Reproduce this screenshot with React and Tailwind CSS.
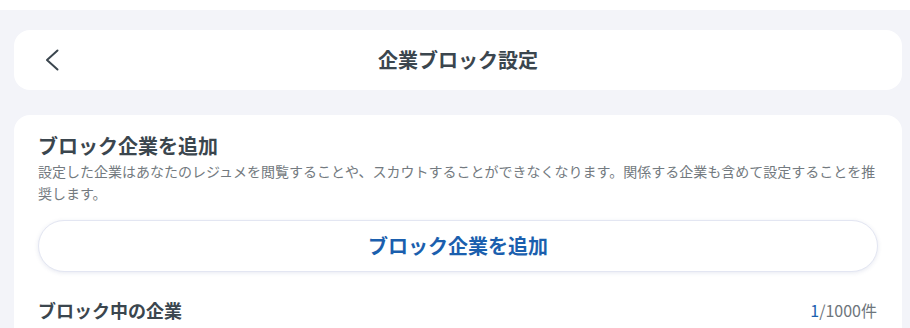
import React from 'react';

const font = { fontFamily: '"Noto Sans CJK JP", "Noto Sans", sans-serif' };

export default function App() {
  const blocked = 1;
  const limit = 1000;

  return (
    <div className="min-h-screen bg-[#f3f4f9] text-[#3b464e]" style={font}>
      <div className="h-[10px] bg-white" />

      <div className="pl-[14px] pt-[20px] w-[902px]">
        {/* Header */}
        <div className="h-[60px] rounded-2xl bg-white grid grid-cols-[80px_1fr_80px] items-center">
          <button className="flex items-center pl-[31px] h-full">
            <svg width="14" height="24" viewBox="0 0 14 24" fill="none">
              <path d="M12.5 2.5 L2 12 L12.5 21.5" stroke="#3b464e" strokeWidth="2" strokeLinecap="round" strokeLinejoin="round" />
            </svg>
          </button>
          <h1 className="text-center text-[20px] font-bold leading-[28px]">企業ブロック設定</h1>
          <div />
        </div>

        {/* Block settings */}
        <div className="mt-[25px] rounded-2xl bg-white px-6 pt-[17px] pb-6">
          <h2 className="text-[20px] font-bold leading-[28px]">ブロック企業を追加</h2>
          <p className="text-[14px] leading-[22px] text-[#737a80]">
            設定した企業はあなたのレジュメを閲覧することや、スカウトすることができなくなります。関係する企業も含めて設定することを推奨します。
          </p>
          <button className="mt-[16px] w-full h-[52px] rounded-full bg-white border border-[#e3e6f2] shadow-[0_1px_4px_rgba(60,70,140,0.12)] text-[20px] font-bold text-[#1b5fae]">
            ブロック企業を追加
          </button>

          <div className="mt-[24px] flex items-center justify-between">
            <h2 className="text-[18px] font-bold leading-[28px]">ブロック中の企業</h2>
            <span className="text-[16px] text-[#6e767c] pr-[1px]">
              <span className="text-[#1b5fae]">{blocked}</span>/{limit}件
            </span>
          </div>
        </div>
      </div>
    </div>
  );
}
